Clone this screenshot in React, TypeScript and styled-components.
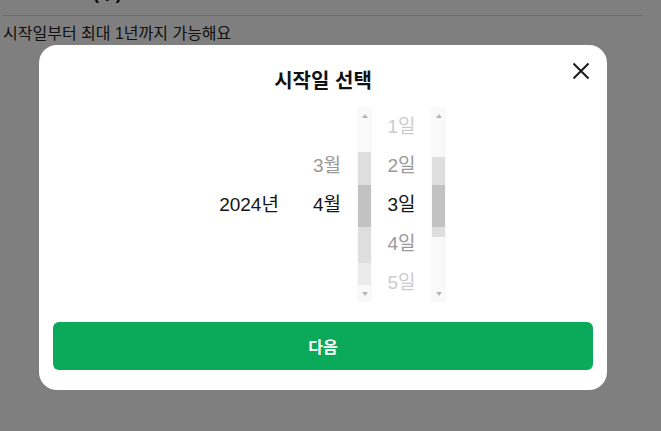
import React from 'react'
import styled, { createGlobalStyle } from 'styled-components'

type Tone = 'strong' | 'mid' | 'faint'
type PickerItem = { label: string; tone: Tone } | null
type Segment = { height: number; shade?: 'light' | 'dark' | 'pale' }

const years: PickerItem[] = [null, null, { label: '2024년', tone: 'strong' }, null, null]
const months: PickerItem[] = [
  null,
  { label: '3월', tone: 'mid' },
  { label: '4월', tone: 'strong' },
  null,
  null,
]
const days: PickerItem[] = [
  { label: '1일', tone: 'faint' },
  { label: '2일', tone: 'mid' },
  { label: '3일', tone: 'strong' },
  { label: '4일', tone: 'mid' },
  { label: '5일', tone: 'faint' },
]

// scrollbar thumbs as they show in the screenshot
const monthBar: Segment[] = [
  { height: 28 },
  { height: 33, shade: 'light' },
  { height: 42, shade: 'dark' },
  { height: 36, shade: 'light' },
  { height: 22, shade: 'pale' },
]
const dayBar: Segment[] = [
  { height: 33 },
  { height: 28, shade: 'light' },
  { height: 42, shade: 'dark' },
  { height: 10, shade: 'light' },
]

const toneColor: Record<Tone, string> = {
  strong: '#151515',
  mid: '#999999',
  faint: '#cccccc',
}

const shadeColor = {
  light: '#dedede',
  dark: '#c2c2c2',
  pale: '#ebebeb',
}

export default function App() {
  return (
    <>
      <GlobalStyle />
      <Page>
        <Header>
          <HeaderDate>2024.04.03(수)</HeaderDate>
        </Header>
        <Notice>시작일부터 최대 1년까지 가능해요</Notice>
      </Page>

      <Overlay>
        <Modal>
          <Title>시작일 선택</Title>
          <CloseButton type="button" aria-label="닫기">
            <svg width="18" height="18" viewBox="0 0 18 18" fill="none">
              <path d="M1.5 1.5L16.5 16.5M16.5 1.5L1.5 16.5" stroke="#1a1a1a" strokeWidth="2" />
            </svg>
          </CloseButton>

          <PickerRow>
            <YearColumn>
              <ItemList width={60}>
                {years.map((item, i) => (
                  <Item key={i} tone={item?.tone ?? 'faint'}>{item?.label}</Item>
                ))}
              </ItemList>
            </YearColumn>
            <Column>
              <ItemList width={60}>
                {months.map((item, i) => (
                  <Item key={i} tone={item?.tone ?? 'faint'}>{item?.label}</Item>
                ))}
              </ItemList>
              <ScrollBar segments={monthBar} />
            </Column>
            <Column>
              <ItemList width={59}>
                {days.map((item, i) => (
                  <Item key={i} tone={item?.tone ?? 'faint'}>{item?.label}</Item>
                ))}
              </ItemList>
              <ScrollBar segments={dayBar} />
            </Column>
          </PickerRow>

          <NextButton type="button">다음</NextButton>
        </Modal>
      </Overlay>
    </>
  )
}

const ScrollBar = (props: { segments: Segment[] }) => (
  <Track>
    <Arrow direction="up" />
    <TrackBody>
      {props.segments.map((s, i) => (
        <Thumb key={i} shade={s.shade} style={{ height: s.height }} />
      ))}
    </TrackBody>
    <Arrow direction="down" />
  </Track>
)

const GlobalStyle = createGlobalStyle`
  html, body {
    margin: 0;
    padding: 0;
    background: #ffffff;
    overflow: hidden;
  }
  body {
    font-family: "Liberation Sans", "Noto Sans CJK KR", sans-serif;
    color: #222222;
  }
`

const Page = styled.div`
  width: 640px;
  margin-left: 3px;
`

const Header = styled.div`
  margin-top: -18px;
  padding-bottom: 11px;
  border-bottom: 1px solid #dcdcdc;
`

const HeaderDate = styled.div`
  font-size: 18px;
  font-weight: bold;
  line-height: 22px;
  color: #111111;
`

const Notice = styled.p`
  margin: 7px 0 0;
  font-size: 16px;
  line-height: 22px;
  color: #222222;
`

const Overlay = styled.div`
  position: fixed;
  inset: 0;
  background: rgba(0, 0, 0, 0.5);
  display: flex;
  align-items: center;
  justify-content: center;
  padding: 4px 18px 0 3px;
`

const Modal = styled.div`
  position: relative;
  width: 568px;
  box-sizing: border-box;
  padding: 23px 14px 20px;
  background: #ffffff;
  border-radius: 18px;
  display: flex;
  flex-direction: column;
`

const Title = styled.h2`
  margin: 0 0 13px;
  text-align: center;
  font-size: 20px;
  line-height: 26px;
  font-weight: bold;
  color: #111111;
`

const CloseButton = styled.button`
  position: absolute;
  top: 17px;
  right: 17px;
  width: 18px;
  height: 18px;
  padding: 0;
  border: none;
  background: transparent;
  display: flex;
  cursor: pointer;
`

const PickerRow = styled.div`
  display: flex;
  justify-content: center;
  height: 195px;
  padding-left: 19px;
`

const Column = styled.div`
  display: flex;
  flex-direction: row;
`

const YearColumn = styled(Column)`
  margin-right: 18px;
`

const ItemList = styled.div<{ width: number }>`
  display: flex;
  flex-direction: column;
  width: ${(p) => p.width}px;
`

const Item = styled.div<{ tone: Tone }>`
  height: 39px;
  line-height: 39px;
  text-align: center;
  white-space: nowrap;
  font-size: 19px;
  color: ${(p) => toneColor[p.tone]};
`

const Track = styled.div`
  width: 15px;
  height: 195px;
  display: flex;
  flex-direction: column;
  background: #f9f9f9;
`

const TrackBody = styled.div`
  flex: 1;
  display: flex;
  flex-direction: column;
  padding: 0 1px;
`

const Thumb = styled.div<{ shade?: 'light' | 'dark' | 'pale' }>`
  flex: none;
  background: ${(p) => (p.shade ? shadeColor[p.shade] : 'transparent')};
`

const Arrow = styled.div<{ direction: 'up' | 'down' }>`
  height: 17px;
  display: flex;
  align-items: center;
  justify-content: center;
  &::before {
    content: '';
    width: 0;
    height: 0;
    border-left: 3.5px solid transparent;
    border-right: 3.5px solid transparent;
    ${(p) =>
      p.direction === 'up'
        ? 'border-bottom: 4px solid #b5b5b5;'
        : 'border-top: 4px solid #b5b5b5;'}
  }
`

const NextButton = styled.button`
  margin-top: 20px;
  height: 48px;
  border: none;
  border-radius: 6px;
  background: #0aaa5a;
  color: #ffffff;
  font-family: "Liberation Sans", "Noto Sans CJK KR", sans-serif;
  font-size: 16px;
  font-weight: bold;
  cursor: pointer;
`
